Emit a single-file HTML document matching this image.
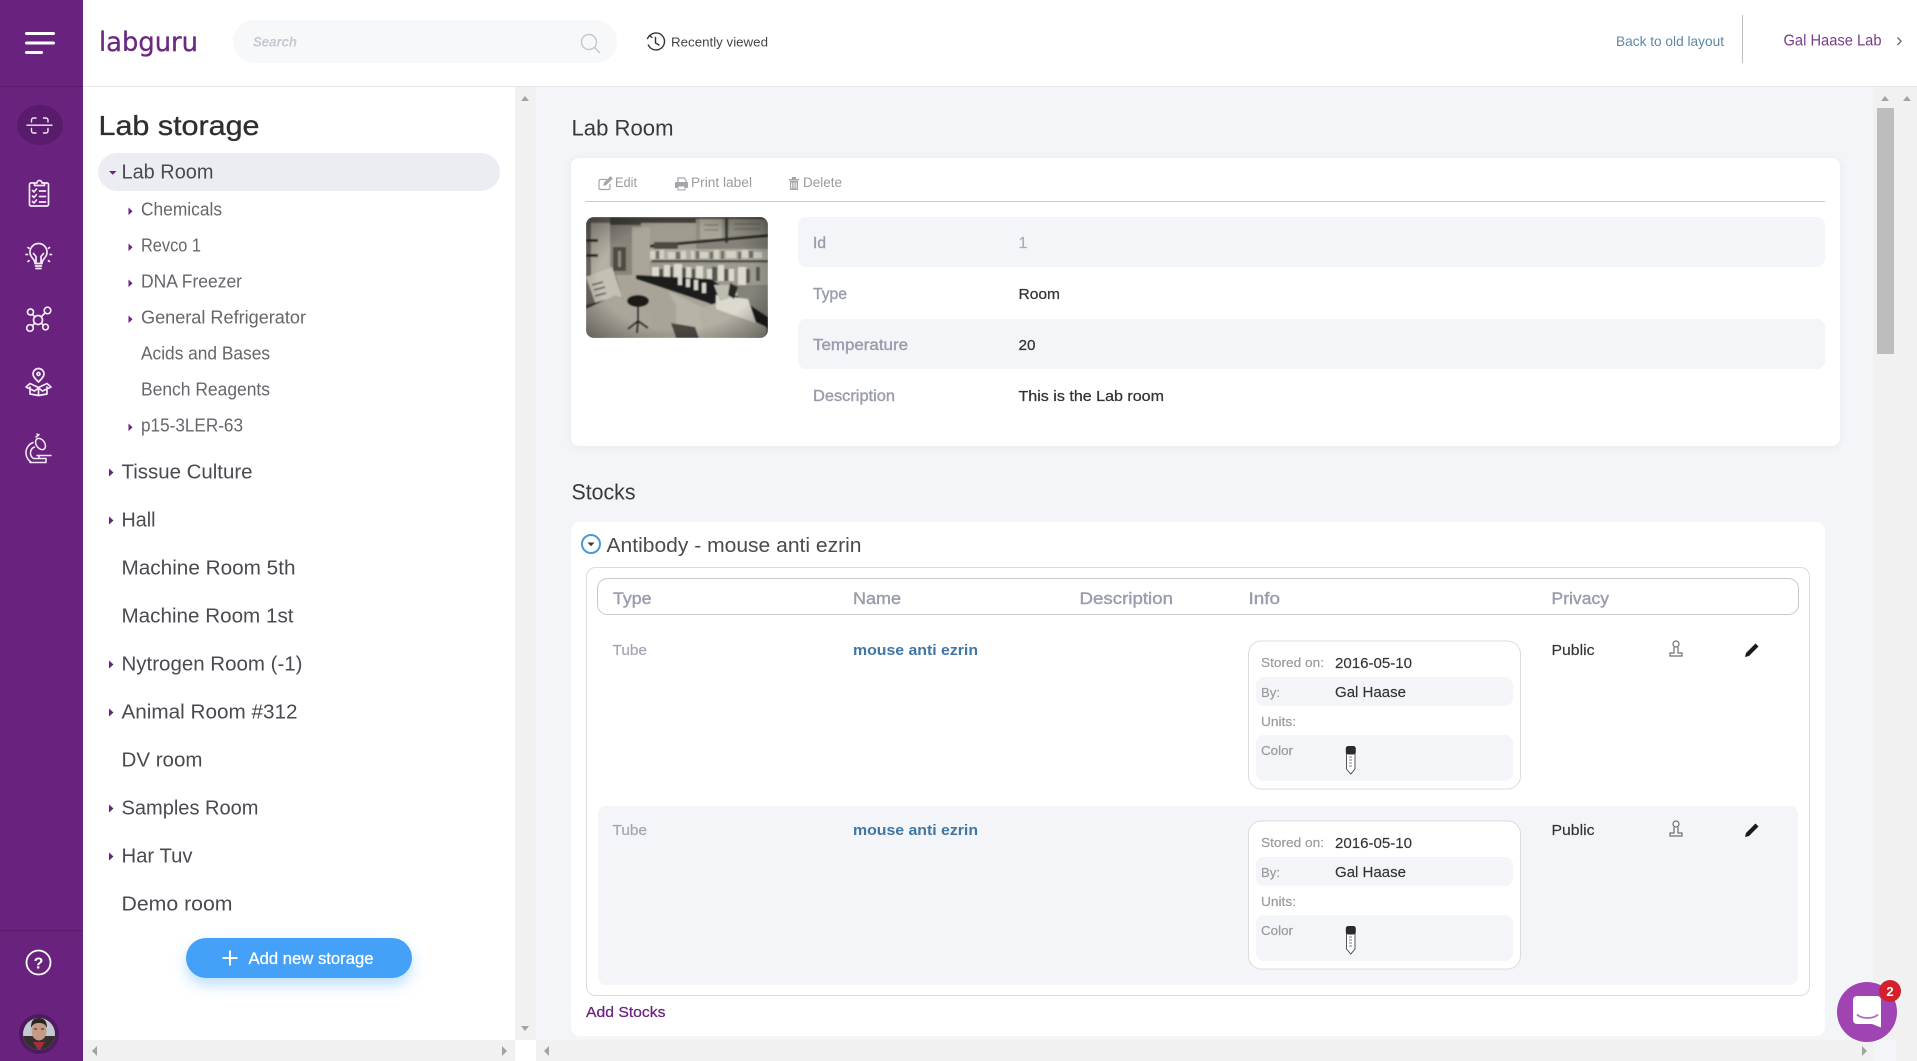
<!DOCTYPE html>
<html lang="en">
<head>
<meta charset="utf-8">
<title>Labguru - Lab storage</title>
<style>
html,body{margin:0;padding:0;width:1917px;height:1061px;overflow:hidden;background:#f3f5f8}
svg{display:block}
text{font-family:"Liberation Sans",Arial,sans-serif}
.t1{font-size:20px;fill:#4a4a50;transform:translate(-.5px,-.5px)}
.t2{font-size:18px;fill:#66666c;transform:translate(0,-.5px)}
.lbl{font-size:15.5px;fill:#9a9dab;stroke:#9a9dab;stroke-width:.4px}
.val{font-size:15px;fill:#333;stroke:#333;stroke-width:.25px}
.act{font-size:13.5px;fill:#9b9b9f}
.hd{font-size:16.5px;fill:#9a9dab;stroke:#9a9dab;stroke-width:.4px}
.sm{font-size:13px;fill:#9a9a9f;stroke:#9a9a9f;stroke-width:.2px}
.in{font-size:15px;fill:#333;stroke:#333;stroke-width:.15px}
.tb{font-size:15px;fill:#a3a6b0;stroke:#a3a6b0;stroke-width:.2px}
.ic{fill:none;stroke:#f4eaf6;stroke-width:1.7;stroke-linecap:round;stroke-linejoin:round}
</style>
</head>
<body>
<svg xmlns="http://www.w3.org/2000/svg" width="1917" height="1061" viewBox="0 0 1917 1061">
<defs>
<filter id="sh" x="-10%" y="-10%" width="120%" height="120%"><feDropShadow dx="0" dy="1" stdDeviation="4" flood-color="#c8ccd8" flood-opacity=".35"/></filter>
<filter id="bs" x="-20%" y="-40%" width="140%" height="220%"><feDropShadow dx="0" dy="7" stdDeviation="7" flood-color="#45a1f8" flood-opacity=".35"/></filter>
<filter id="bl"><feGaussianBlur stdDeviation=".8"/></filter>
<clipPath id="imgc"><rect width="182" height="121" rx="8"/></clipPath>
<clipPath id="avc"><circle cx="39" cy="1034" r="16"/></clipPath>
<radialGradient id="vg" cx=".5" cy=".5" r=".72"><stop offset=".6" stop-color="#000" stop-opacity="0"/><stop offset="1" stop-color="#000" stop-opacity=".45"/></radialGradient>
</defs>

<!-- page backgrounds -->
<rect width="1917" height="1061" fill="#f3f5f8"/>
<rect x="83" y="87" width="432" height="953" fill="#fff"/>

<!-- left panel scrollbars -->
<rect x="515" y="87" width="21" height="953" fill="#f1f1f1"/>
<path d="M521 101l4-5 4 5z" fill="#a3a3a3"/>
<path d="M521 1026l4 5 4-5z" fill="#a3a3a3"/>
<rect x="83" y="1040" width="432" height="21" fill="#f1f1f1"/>
<path d="M97 1046l-5 5 5 5z" fill="#a3a3a3"/>
<path d="M502 1046l5 5-5 5z" fill="#a3a3a3"/>
<rect x="515" y="1040" width="21" height="21" fill="#fff"/>

<!-- right scrollbars -->
<rect x="1873" y="87" width="23" height="953" fill="#f1f1f1"/>
<rect x="1896" y="87" width="21" height="974" fill="#f1f1f1"/>
<rect x="1877" y="108" width="17" height="246" fill="#bdbdbd"/>
<path d="M1881 101l4-5 4 5z" fill="#a3a3a3"/>
<path d="M1903 101l4-5 4 5z" fill="#a3a3a3"/>
<rect x="536" y="1040" width="1337" height="21" fill="#f1f1f1"/>
<rect x="1873" y="1040" width="23" height="21" fill="#f3f5f8"/>
<path d="M549 1046l-5 5 5 5z" fill="#a3a3a3"/>
<path d="M1862 1046l5 5-5 5z" fill="#a3a3a3"/>

<!-- header -->
<rect x="83" y="0" width="1834" height="86" fill="#fff"/>
<rect x="83" y="86" width="1834" height="1" fill="#e4e6ea"/>
<text x="99" y="51" style="font-family:'DejaVu Sans','Liberation Sans',sans-serif" font-size="27" textLength="99" lengthAdjust="spacingAndGlyphs" fill="#6b2a80" stroke="#6b2a80" stroke-width=".3">labguru</text>
<rect x="233" y="20" width="384" height="43" rx="21.5" fill="#f7f8fa"/>
<text x="253" y="46.500" font-size="14" font-weight="700" font-style="italic" fill="#c6c8d2" textLength="44" lengthAdjust="spacingAndGlyphs">Search</text>
<g fill="none" stroke="#c4c6cc" stroke-width="1.400"><circle cx="589" cy="42" r="7.500"/><path d="M594.500 47.500l5 5" stroke-linecap="round"/></g>
<g fill="none" stroke="#333" stroke-width="1.400" stroke-linecap="round"><path d="M649.500 36a8.500 8.500 0 1 1-1.200 9"/><path d="M655.500 37.500v5.500l3.500 2"/><path d="M647.500 38.500l2-3 2.500 2"/></g>
<text x="671" y="46.500" font-size="13" fill="#444" textLength="97" lengthAdjust="spacingAndGlyphs">Recently viewed</text>
<text x="1616" y="46" font-size="14" fill="#5b87a8" textLength="108" lengthAdjust="spacingAndGlyphs">Back to old layout</text>
<rect x="1742" y="15" width="1" height="48" fill="#bdbdbd"/>
<text x="1783.500" y="45.500" font-size="15.500" fill="#7b3b8c" textLength="98" lengthAdjust="spacingAndGlyphs">Gal Haase Lab</text>
<path d="M1897.500 37.500l3.500 3.700-3.500 3.700" fill="none" stroke="#666" stroke-width="1.300"/>

<!-- purple sidebar -->
<rect x="0" y="0" width="83" height="1061" fill="#69237e"/>
<rect x="0" y="86" width="83" height="1" fill="#5a1c6e"/>
<rect x="0" y="930" width="83" height="1" fill="#5a1c6e"/>
<g fill="#fff"><rect x="25" y="32" width="30" height="3" rx="1.500"/><rect x="25" y="41.500" width="30" height="3" rx="1.500"/><rect x="25" y="51" width="18" height="3" rx="1.500"/></g>
<ellipse cx="40" cy="125" rx="23" ry="20" fill="#591c6d"/>
<g class="ic" style="stroke-width:1.400">
<path d="M31.500 122v-2a2 2 0 0 1 2-2h2.500M43.500 118h2.500a2 2 0 0 1 2 2v2M31.500 128.500v2.500a2 2 0 0 0 2 2h2.500M43.500 133h2.500a2 2 0 0 0 2-2v-2.500"/>
<path d="M27 125.200h25"/>
</g>
<g class="ic">
<path d="M34.500 183h-3.500a1.500 1.500 0 0 0-1.500 1.500v20a1.500 1.500 0 0 0 1.500 1.500h16a1.500 1.500 0 0 0 1.500-1.500v-20a1.500 1.500 0 0 0-1.500-1.500h-3.500"/>
<path d="M34.500 185.500v-2.500h2.500a2.500 2.500 0 0 1 5 0h2.500v2.500z"/>
<path d="M32.500 190.500l1.500 1.500 2.500-3M32.500 196l1.500 1.500 2.500-3M32.500 201.500l1.500 1.500 2.500-3M39.500 191h6M39.500 196.500h6M39.500 202h6"/>
</g>
<g class="ic" transform="translate(0 1.500)">
<path d="M35 262c0-3-1.500-4-3-6a8.500 8.500 0 1 1 13 0c-1.500 2-3 3-3 6z"/>
<path d="M35.500 264.500h6M36 267h5"/>
<path d="M36 262v-7l-2.500-3M41 262v-7l2.500-3"/>
<path d="M26 253h1.500M50 253h1.500M28 246l1 .8M48.500 246.800l1-.8M28 260l1-.8M48.500 259.200l1 .8"/>
</g>
<g class="ic">
<circle cx="38" cy="320" r="4.500"/>
<circle cx="30.500" cy="312" r="3"/><circle cx="47.500" cy="310.500" r="3.300"/><circle cx="30" cy="328" r="3.300"/><circle cx="45.500" cy="327" r="2.800"/>
<path d="M32.500 314.500l2.500 2.500M41.500 316.500l3.500-3.500M35 323l-2.500 2.500M41.500 323.500l2 1.500"/>
</g>
<g class="ic">
<path d="M38.500 382c-3-3-5.500-5.500-5.500-8a5.500 5.500 0 0 1 11 0c0 2.500-2.500 5-5.500 8z"/>
<circle cx="38.500" cy="374" r="1.500"/>
<path d="M30 387v7l8.500 1.500 8.500-1.500v-7"/>
<path d="M38.500 388v7M30 383.500l8.500 4 8.500-4M30 383.500l-4 3.500 8.500 4 4-3M47 383.500l4 3.500-8.500 4-4-3"/>
</g>
<g class="ic" style="stroke-width:1.500">
<path d="M33 442.500a11 11 0 0 0-2 19.500"/>
<path d="M34.500 447a6.500 6.500 0 0 0-1 11.500h5"/>
<ellipse cx="40.500" cy="444" rx="4.200" ry="6.200" transform="rotate(-35 40.500 444)"/>
<path d="M36 437l3-2.500M38 435.500l-1-1.500"/>
<path d="M37 455.500h14"/>
<path d="M30 462.500h16v-4h-7v-3"/>
</g>
<g fill="none" stroke="#fff" stroke-width="1.800"><circle cx="38.500" cy="962.500" r="12"/></g>
<text x="38.500" y="968.500" text-anchor="middle" font-size="16" font-weight="700" fill="#fff">?</text>
<circle cx="39" cy="1034" r="20" fill="#4f1b60"/>
<g clip-path="url(#avc)">
<rect x="22" y="1017" width="34" height="34" fill="#c3cbd1"/>
<rect x="22" y="1036" width="34" height="16" fill="#35302f"/>
<path d="M33 1042l6 9 6-9z" fill="#a82c40"/>
<ellipse cx="39" cy="1031" rx="7.500" ry="9.500" fill="#c49a84"/>
<path d="M31 1028c0-8 3-10 8-10s8 3 8 10c-2-4-4-5-8-5s-6 1-8 5z" fill="#2d2422"/>
<path d="M34 1029h3M41 1029h3" stroke="#3a2a26" stroke-width="1"/>
</g>

<!-- Lab storage tree -->
<text x="98.500" y="135" font-size="28" fill="#2f2f33" stroke="#2f2f33" stroke-width=".35" textLength="161" lengthAdjust="spacingAndGlyphs">Lab storage</text>
<rect x="98" y="153" width="402" height="38" rx="19" fill="#ecedf2"/>
<path d="M109 171h7.500l-3.750 3.800z" fill="#6b2280"/>
<text class="t1" x="122" y="179" textLength="92" lengthAdjust="spacingAndGlyphs">Lab Room</text>

<g fill="#6b2280">
<path d="M128.500 207.500l4 3.800-4 3.800z"/>
<path d="M128.500 243.500l4 3.800-4 3.800z"/>
<path d="M128.500 279.500l4 3.800-4 3.800z"/>
<path d="M128.500 315.500l4 3.800-4 3.800z"/>
<path d="M128.500 423.500l4 3.800-4 3.800z"/>
<path d="M109 468.500l4.500 4-4.500 4z"/>
<path d="M109 516.500l4.500 4-4.500 4z"/>
<path d="M109 660.500l4.500 4-4.500 4z"/>
<path d="M109 708.500l4.500 4-4.500 4z"/>
<path d="M109 804.500l4.500 4-4.500 4z"/>
<path d="M109 852.500l4.500 4-4.500 4z"/>
</g>
<text class="t2" x="141" y="216" textLength="81" lengthAdjust="spacingAndGlyphs">Chemicals</text>
<text class="t2" x="141" y="252" textLength="60" lengthAdjust="spacingAndGlyphs">Revco 1</text>
<text class="t2" x="141" y="288" textLength="101" lengthAdjust="spacingAndGlyphs">DNA Freezer</text>
<text class="t2" x="141" y="324" textLength="165" lengthAdjust="spacingAndGlyphs">General Refrigerator</text>
<text class="t2" x="141" y="360" textLength="129" lengthAdjust="spacingAndGlyphs">Acids and Bases</text>
<text class="t2" x="141" y="396" textLength="129" lengthAdjust="spacingAndGlyphs">Bench Reagents</text>
<text class="t2" x="141" y="432" textLength="102" lengthAdjust="spacingAndGlyphs">p15-3LER-63</text>
<text class="t1" x="122" y="479" textLength="131" lengthAdjust="spacingAndGlyphs">Tissue Culture</text>
<text class="t1" x="122" y="527" textLength="34" lengthAdjust="spacingAndGlyphs">Hall</text>
<text class="t1" x="122" y="575" textLength="174" lengthAdjust="spacingAndGlyphs">Machine Room 5th</text>
<text class="t1" x="122" y="623" textLength="172" lengthAdjust="spacingAndGlyphs">Machine Room 1st</text>
<text class="t1" x="122" y="671" textLength="181" lengthAdjust="spacingAndGlyphs">Nytrogen Room (-1)</text>
<text class="t1" x="122" y="719" textLength="176" lengthAdjust="spacingAndGlyphs">Animal Room #312</text>
<text class="t1" x="122" y="767" textLength="81" lengthAdjust="spacingAndGlyphs">DV room</text>
<text class="t1" x="122" y="815" textLength="137" lengthAdjust="spacingAndGlyphs">Samples Room</text>
<text class="t1" x="122" y="863" textLength="71" lengthAdjust="spacingAndGlyphs">Har Tuv</text>
<text class="t1" x="122" y="911" textLength="111" lengthAdjust="spacingAndGlyphs">Demo room</text>

<rect x="186" y="938" width="226" height="40" rx="20" fill="#45a1f8" filter="url(#bs)"/>
<path d="M230 950.500v15M222.500 958h15" stroke="#fff" stroke-width="2" fill="none"/>
<text x="248.500" y="964" font-size="16.500" fill="#fff" stroke="#fff" stroke-width=".25" textLength="125" lengthAdjust="spacingAndGlyphs">Add new storage</text>

<!-- Lab Room details -->
<text x="571.500" y="135.700" font-size="22" fill="#3a3a3e" textLength="102" lengthAdjust="spacingAndGlyphs">Lab Room</text>
<rect x="571" y="158" width="1269" height="288" rx="8" fill="#fff" filter="url(#sh)"/>

<g transform="translate(0 -1)">
<g fill="none" stroke="#a5a5a9" stroke-width="1.200"><path d="M607 180.500h-6.500a1.500 1.500 0 0 0-1.500 1.500v7a1.500 1.500 0 0 0 1.500 1.500h8a1.500 1.500 0 0 0 1.500-1.500v-4"/><path d="M604 186l.5-2 6-6 1.500 1.500-6 6z" fill="#a5a5a9"/></g>
<text class="act" x="615" y="188" textLength="22" lengthAdjust="spacingAndGlyphs">Edit</text>
<g fill="#a5a5a9"><path d="M678 179h6l2 2v3h-8z" fill="none" stroke="#a5a5a9" stroke-width="1.200"/><rect x="675" y="183" width="13" height="6" rx="1"/><rect x="678" y="187" width="7" height="4" fill="#fff" stroke="#a5a5a9"/></g>
<text class="act" x="691" y="188" textLength="61" lengthAdjust="spacingAndGlyphs">Print label</text>
<g fill="#a5a5a9"><rect x="789" y="180" width="10" height="1.500"/><rect x="792" y="178" width="4" height="2"/><path d="M790 182h8v9h-8zM791.200 183.500v6h1v-6zM793.500 183.500v6h1v-6zM795.700 183.500v6h1v-6z" fill-rule="evenodd"/></g>
<text class="act" x="803" y="188" textLength="39" lengthAdjust="spacingAndGlyphs">Delete</text>
</g>
<rect x="585" y="201" width="1240" height="1" fill="#c9c9cc"/>

<!-- room photo -->
<g transform="translate(586 217)" clip-path="url(#imgc)">
<g filter="url(#bl)">
<rect width="182" height="121" fill="#85827a"/>
<rect x="0" y="0" width="182" height="8" fill="#45423b"/>
<rect x="110" y="2" width="72" height="22" fill="#8f8c80"/>
<rect x="114" y="2" width="22" height="20" fill="#a8a598"/><rect x="144" y="2" width="34" height="16" fill="#9a9689"/>
<path d="M118 8h14M118 13h14M148 7h26M148 12h26" stroke="#6c695f" stroke-width="1"/>
<rect x="139" y="0" width="3" height="26" fill="#3a372f"/>
<rect x="55" y="6" width="55" height="26" fill="#9f9b8f"/>
<rect x="60" y="32" width="122" height="12" fill="#aeaba0"/>
<rect x="60" y="46" width="122" height="22" fill="#9d9a8e"/>
<path d="M60 28l122-11v3L60 31z" fill="#2f2c27"/>
<path d="M66 43h116v2H66z" fill="#3f3c34"/>
<rect x="68" y="25" width="24" height="7" fill="#4c483f"/>
<path d="M64 34h5v8h-5zM74 33h4v9h-4zM82 35h7v7h-7zM95 34h5v8h-5zM105 34h3v8h-3zM114 35h8v6h-8zM128 33h5v9h-5zM140 34h10v7h-10zM156 33h6v8h-6zM168 35h8v6h-8z" fill="#d4d1c7"/>
<path d="M70 34h3v8h-3zM90 35h4v7h-4zM110 34h3v8h-3zM124 35h3v7h-3zM135 34h3v8h-3zM152 35h3v7h-3zM163 34h4v7h-4z" fill="#6f6c62"/>
<path d="M66 50h7v14h-7zM78 48h6v16h-6zM88 47h8v17h-8zM100 50h5v14h-5zM110 49h7v16h-7zM121 52h5v12h-5zM132 48h6v16h-6zM143 52h5v12h-5zM152 50h8v18h-8z" fill="#dcd9cf"/>
<path d="M73 52h4v12h-4zM84 50h3v14h-3zM96 51h4v13h-4zM106 52h3v12h-3zM126 50h5v14h-5zM138 52h4v12h-4zM160 52h4v14h-4zM170 50h4v14h-4z" fill="#57544b"/>
<path d="M0 0h24v121H0z" fill="#6f6c63"/>
<path d="M5 6h19v62H5z" fill="#b5b1a4"/>
<path d="M0 22h12v3H0zM0 37h12v3H0z" fill="#2f2c27"/>
<path d="M24 26h22v32H24z" fill="#8a8579"/>
<path d="M46 10h18v48H46z" fill="#a9a599"/>
<path d="M27 30h13v24H27z" fill="#4e4b43"/>
<path d="M32 34h3v16h-3z" fill="#8e8a7e"/>
<path d="M0 60l26-10 10 30-26 8z" fill="#c4c0b4"/>
<path d="M6 68l11-3M8 73l11-3M9 79l11-3" stroke="#5a564d" stroke-width="1.500"/>
<path d="M0 88l30-8 2 10-32 8z" fill="#3a372f"/>
<path d="M30 58l22 0 128 48v15H60L36 80z" fill="#a8a498"/>
<path d="M30 78l36 21v22H0V92z" fill="#aaa69a"/>
<path d="M50 58l75 4 57 38v12l-60-26-72-24z" fill="#1f1d1a"/>
<path d="M82 74l46 22v25H90V88z" fill="#b7b3a7"/>
<path d="M85 106l24 4 4 11H90z" fill="#4a473f"/>
<path d="M114 92l16-6 50 24v11h-64z" fill="#b3afa3"/>
<path d="M130 78l32 4 8 24-40-14z" fill="#dcd9cf"/>
<path d="M128 68h20l4 10-18 6z" fill="#bebbb0"/>
<path d="M144 66l8 4-4 12-6-4z" fill="#2b2824"/>
<path d="M92 60h4v8h-4zM100 62h4v8h-4zM108 63h4v10h-4zM116 66h4v10h-4z" fill="#d6d3c9"/>
<ellipse cx="52" cy="84" rx="11" ry="6" fill="#1d1b18"/>
<path d="M52 90v16M52 104l-10 8M52 104l10 7M52 104l-1 12" stroke="#211f1b" stroke-width="2" fill="none"/>
</g>
<rect width="182" height="121" fill="url(#vg)"/>
</g>

<rect x="798" y="217" width="1027" height="50" rx="8" fill="#f3f5f8"/>
<rect x="798" y="319" width="1027" height="50" rx="8" fill="#f3f5f8"/>
<text class="lbl" x="813" y="248" textLength="13" lengthAdjust="spacingAndGlyphs">Id</text>
<text class="lbl" x="813" y="299" textLength="34" lengthAdjust="spacingAndGlyphs">Type</text>
<text class="lbl" x="813" y="350" textLength="95" lengthAdjust="spacingAndGlyphs">Temperature</text>
<text class="lbl" x="813" y="401" textLength="82" lengthAdjust="spacingAndGlyphs">Description</text>
<text x="1018.500" y="248" font-size="16" fill="#a8abb5" stroke="#a8abb5" stroke-width=".2">1</text>
<text class="val" x="1018.500" y="299" textLength="41.500" lengthAdjust="spacingAndGlyphs">Room</text>
<text class="val" x="1018.500" y="350" textLength="17" lengthAdjust="spacingAndGlyphs">20</text>
<text class="val" x="1018.500" y="401" textLength="145.500" lengthAdjust="spacingAndGlyphs">This is the Lab room</text>

<!-- Stocks -->
<text x="571.500" y="499.300" font-size="22" fill="#3a3a3e" textLength="64" lengthAdjust="spacingAndGlyphs">Stocks</text>
<rect x="571" y="522" width="1254" height="514" rx="9" fill="#fff"/>
<circle cx="591" cy="544" r="9" fill="#fff" stroke="#4a9ad4" stroke-width="2"/>
<path d="M587.500 542.500h7l-3.500 3.800z" fill="#3a3a3e"/>
<text x="606.500" y="552" font-size="20" fill="#4a4a50" textLength="255" lengthAdjust="spacingAndGlyphs">Antibody - mouse anti ezrin</text>
<rect x="586.500" y="567.500" width="1223" height="428" rx="9" fill="#fff" stroke="#dcdcde"/>
<rect x="597.500" y="578.500" width="1201" height="36" rx="10" fill="#fff" stroke="#c9c9cc"/>
<text class="hd" x="613" y="604" textLength="38.500" lengthAdjust="spacingAndGlyphs">Type</text>
<text class="hd" x="853" y="604" textLength="48" lengthAdjust="spacingAndGlyphs">Name</text>
<text class="hd" x="1079.500" y="604" textLength="93.500" lengthAdjust="spacingAndGlyphs">Description</text>
<text class="hd" x="1248.500" y="604" textLength="31.500" lengthAdjust="spacingAndGlyphs">Info</text>
<text class="hd" x="1551.500" y="604" textLength="57.500" lengthAdjust="spacingAndGlyphs">Privacy</text>

<rect x="598" y="806" width="1200" height="179" rx="8" fill="#f3f5f8"/>

<!-- row 1 -->
<g id="r1">
<text class="tb" x="612.500" y="655" textLength="34.500" lengthAdjust="spacingAndGlyphs">Tube</text>
<text x="853" y="655" font-size="15" font-weight="700" fill="#3f76a3" textLength="125" lengthAdjust="spacingAndGlyphs">mouse anti ezrin</text>
<rect x="1248.500" y="641" width="272" height="148" rx="13" fill="#fff" stroke="#dcdcde"/>
<text class="sm" x="1261" y="667" textLength="63" lengthAdjust="spacingAndGlyphs">Stored on:</text>
<text class="in" x="1335" y="668" textLength="77" lengthAdjust="spacingAndGlyphs">2016-05-10</text>
<rect x="1256" y="677" width="257" height="29" rx="8" fill="#f3f5f8"/>
<text class="sm" x="1261" y="697" textLength="19" lengthAdjust="spacingAndGlyphs">By:</text>
<text class="in" x="1335" y="697" textLength="71" lengthAdjust="spacingAndGlyphs">Gal Haase</text>
<text class="sm" x="1261" y="726" textLength="35" lengthAdjust="spacingAndGlyphs">Units:</text>
<rect x="1256" y="735" width="257" height="46" rx="8" fill="#f3f5f8"/>
<text class="sm" x="1261" y="755" textLength="32" lengthAdjust="spacingAndGlyphs">Color</text>
<path d="M1346.500 752h8.500v17l-4.200 5-4.300-5z" fill="#fff" stroke="#444" stroke-width=".9"/>
<rect x="1345.800" y="746" width="10" height="8.500" rx="2.500" fill="#2b2b2e"/>
<path d="M1349 757h3M1349 760h3M1349 763h3M1349 766h3" stroke="#555" stroke-width=".7"/>
<text x="1551.500" y="655" font-size="15" fill="#333" stroke="#333" stroke-width=".15" textLength="43" lengthAdjust="spacingAndGlyphs">Public</text>
<g fill="none" stroke="#6f6f72" stroke-width="1.200"><circle cx="1676" cy="644" r="3"/><path d="M1674 647v6h-4v3h12v-3h-4v-6"/></g>
<path d="M1745 657l1-4 9.500-9.500 3 3-9.500 9.500z" fill="#1a1a1a"/>
</g>

<!-- row 2 -->
<g transform="translate(0 180)">
<text class="tb" x="612.500" y="655" textLength="34.500" lengthAdjust="spacingAndGlyphs">Tube</text>
<text x="853" y="655" font-size="15" font-weight="700" fill="#3f76a3" textLength="125" lengthAdjust="spacingAndGlyphs">mouse anti ezrin</text>
<rect x="1248.500" y="641" width="272" height="148" rx="13" fill="#fff" stroke="#dcdcde"/>
<text class="sm" x="1261" y="667" textLength="63" lengthAdjust="spacingAndGlyphs">Stored on:</text>
<text class="in" x="1335" y="668" textLength="77" lengthAdjust="spacingAndGlyphs">2016-05-10</text>
<rect x="1256" y="677" width="257" height="29" rx="8" fill="#f3f5f8"/>
<text class="sm" x="1261" y="697" textLength="19" lengthAdjust="spacingAndGlyphs">By:</text>
<text class="in" x="1335" y="697" textLength="71" lengthAdjust="spacingAndGlyphs">Gal Haase</text>
<text class="sm" x="1261" y="726" textLength="35" lengthAdjust="spacingAndGlyphs">Units:</text>
<rect x="1256" y="735" width="257" height="46" rx="8" fill="#f3f5f8"/>
<text class="sm" x="1261" y="755" textLength="32" lengthAdjust="spacingAndGlyphs">Color</text>
<path d="M1346.500 752h8.500v17l-4.200 5-4.300-5z" fill="#fff" stroke="#444" stroke-width=".9"/>
<rect x="1345.800" y="746" width="10" height="8.500" rx="2.500" fill="#2b2b2e"/>
<path d="M1349 757h3M1349 760h3M1349 763h3M1349 766h3" stroke="#555" stroke-width=".7"/>
<text x="1551.500" y="655" font-size="15" fill="#333" stroke="#333" stroke-width=".15" textLength="43" lengthAdjust="spacingAndGlyphs">Public</text>
<g fill="none" stroke="#6f6f72" stroke-width="1.200"><circle cx="1676" cy="644" r="3"/><path d="M1674 647v6h-4v3h12v-3h-4v-6"/></g>
<path d="M1745 657l1-4 9.500-9.500 3 3-9.500 9.500z" fill="#1a1a1a"/>
</g>

<text x="586" y="1017" font-size="15" fill="#6b2280" stroke="#6b2280" stroke-width=".25" textLength="79.500" lengthAdjust="spacingAndGlyphs">Add Stocks</text>

<!-- chat launcher -->
<circle cx="1867" cy="1012" r="30" fill="#a043b3"/>
<path d="M1857 996h20a4 4 0 0 1 4 4v27.500l-9-3.500h-15a4 4 0 0 1-4-4v-20a4 4 0 0 1 4-4z" fill="#fff"/>
<path d="M1857.500 1015c5 4 15 4 20 0" fill="none" stroke="#b56ac5" stroke-width="1.800" stroke-linecap="round"/>
<circle cx="1890" cy="991" r="11" fill="#d4202a"/>
<text x="1890" y="996" text-anchor="middle" font-size="13" font-weight="700" fill="#fff">2</text>
</svg>
</body>
</html>
